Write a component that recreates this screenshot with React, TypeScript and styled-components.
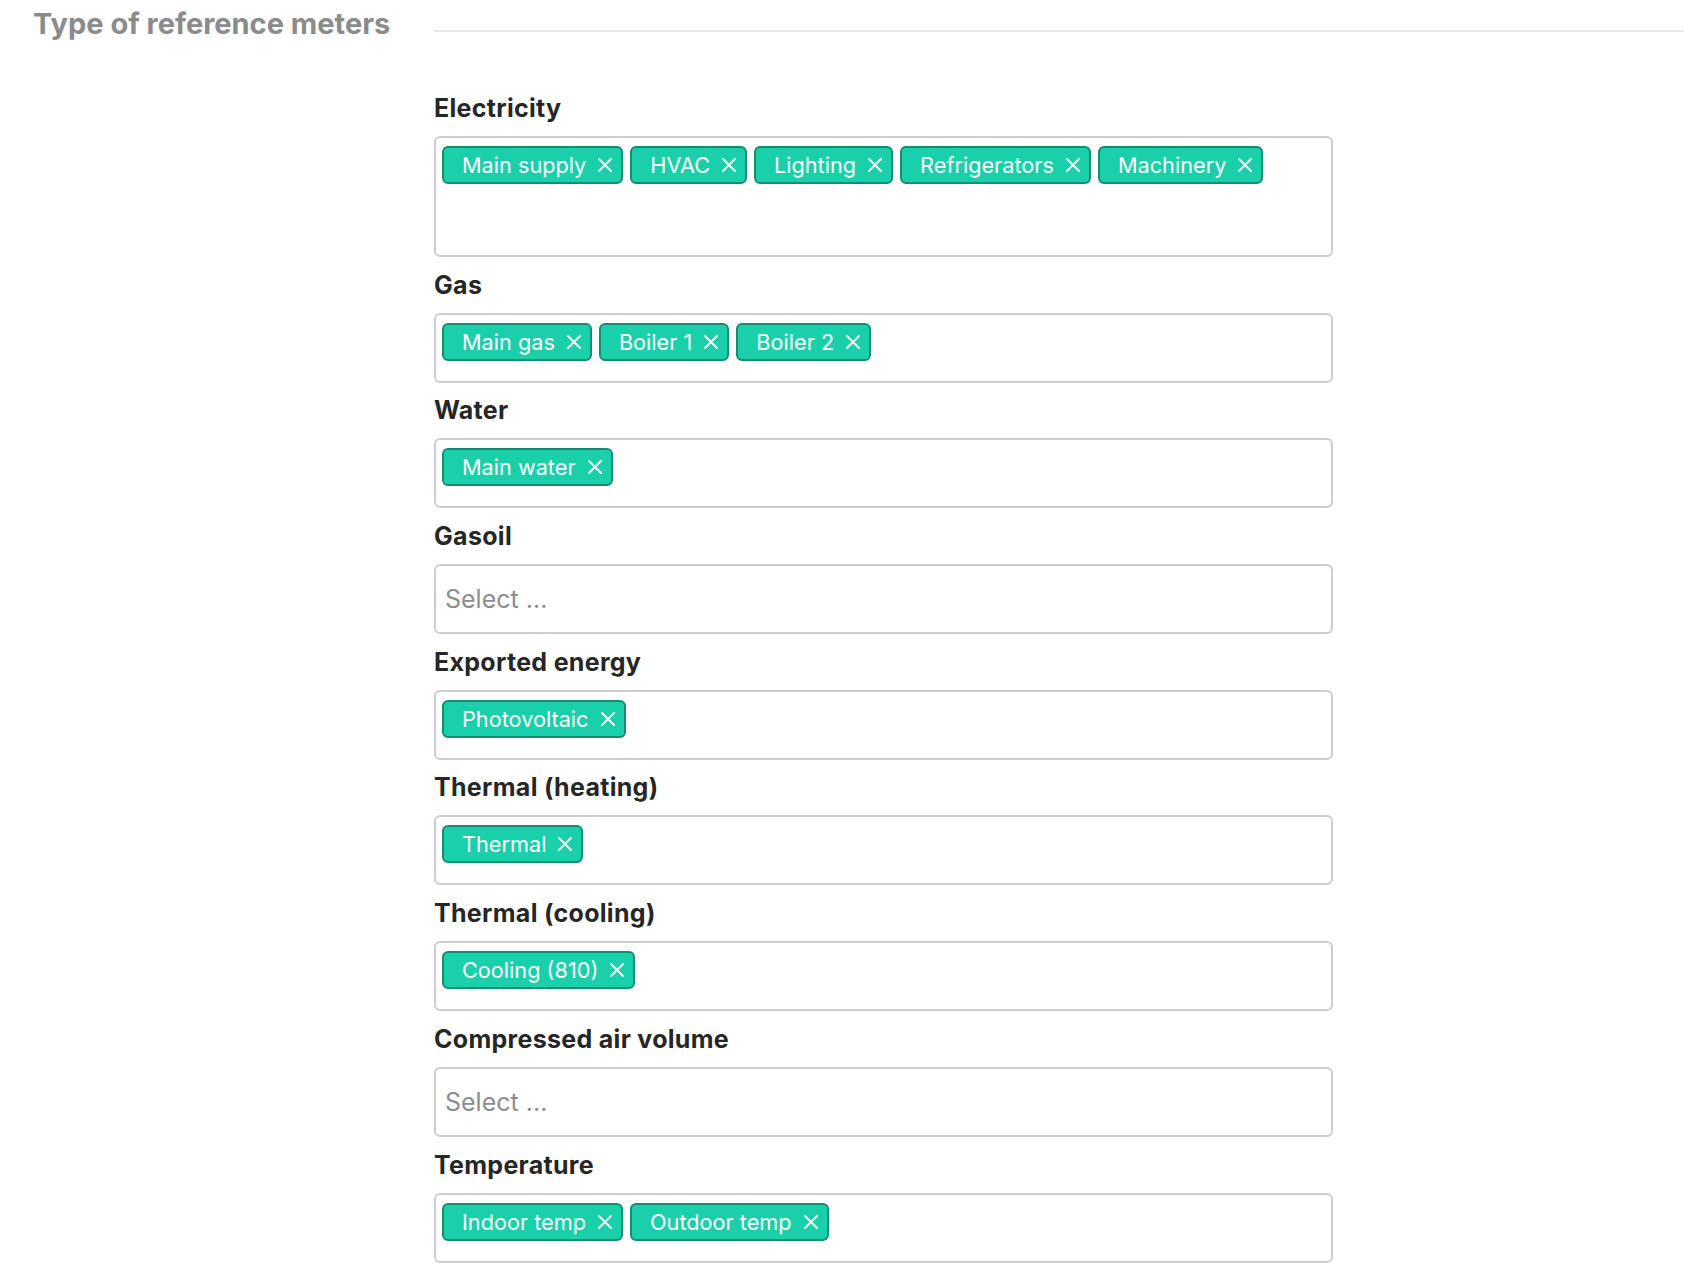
import React from "react";
import styled, { createGlobalStyle } from "styled-components";

const GlobalStyle = createGlobalStyle`
  html, body {
    margin: 0;
    padding: 0;
    background: #ffffff;
  }
  body {
    font-family: Inter, "Noto Sans", "Liberation Sans", sans-serif;
    color: #262626;
    -webkit-font-smoothing: antialiased;
  }
`;

type MeterGroup = {
  label: string;
  selected: string[];
  tall?: boolean;
};

const groups: MeterGroup[] = [
  {
    label: "Electricity",
    selected: ["Main supply", "HVAC", "Lighting", "Refrigerators", "Machinery"],
    tall: true,
  },
  { label: "Gas", selected: ["Main gas", "Boiler 1", "Boiler 2"] },
  { label: "Water", selected: ["Main water"] },
  { label: "Gasoil", selected: [] },
  { label: "Exported energy", selected: ["Photovoltaic"] },
  { label: "Thermal (heating)", selected: ["Thermal"] },
  { label: "Thermal (cooling)", selected: ["Cooling (810)"] },
  { label: "Compressed air volume", selected: [] },
  { label: "Temperature", selected: ["Indoor temp", "Outdoor temp"] },
];

const Section = styled.section`
  display: grid;
  grid-template-columns: 434px 1fr;
  min-height: 1278px;
`;

const SectionTitle = styled.h2`
  margin: 7px 0 0;
  padding-left: 33px;
  font-size: 29px;
  line-height: 34px;
  font-weight: 700;
  color: #8b8b8b;
  letter-spacing: 0;
`;

const Body = styled.div`
  display: flex;
  flex-direction: column;
`;

const Rule = styled.hr`
  margin: 30px 0 0;
  border: 0;
  height: 2px;
  background: #e7e7e7;
`;

const Fields = styled.div`
  display: flex;
  flex-direction: column;
  gap: 13.7px;
  width: 899px;
  padding-top: 62px;
`;

const Field = styled.div`
  display: flex;
  flex-direction: column;
  gap: 14px;
`;

const Label = styled.label`
  font-size: 25px;
  line-height: 28px;
  font-weight: 700;
  letter-spacing: 0.3px;
  color: #262626;
`;

const SelectBox = styled.div<{ $tall?: boolean; $empty?: boolean }>`
  box-sizing: border-box;
  display: flex;
  flex-wrap: wrap;
  align-items: center;
  align-content: ${(p) => (p.$empty ? "center" : "flex-start")};
  gap: 8px 7px;
  min-height: ${(p) => (p.$tall ? "121px" : "70px")};
  padding: ${(p) => (p.$empty ? "0 9px" : "8px 6px 20px")};
  border: 2px solid #cbcdd1;
  border-radius: 6px;
  background: #ffffff;
`;

const Placeholder = styled.span`
  font-size: 25px;
  line-height: 30px;
  color: #8d8d8d;
`;

const Tag = styled.span`
  box-sizing: border-box;
  display: inline-flex;
  align-items: center;
  gap: 12px;
  height: 38px;
  padding: 0 9px 0 18px;
  border: 2px solid #138c74;
  border-radius: 6px;
  background: #1ad0aa;
  color: #ffffff;
  font-size: 21.7px;
  line-height: 26px;
  white-space: nowrap;
`;

const RemoveButton = styled.button`
  display: inline-flex;
  align-items: center;
  justify-content: center;
  width: 14px;
  height: 14px;
  padding: 0;
  border: 0;
  background: transparent;
  color: #ffffff;
  cursor: pointer;
`;

const CrossIcon = () => (
  <svg width="14" height="14" viewBox="0 0 14 14" aria-hidden="true">
    <path
      d="M1 1 L13 13 M13 1 L1 13"
      stroke="currentColor"
      strokeWidth="1.8"
      strokeLinecap="round"
    />
  </svg>
);

const MeterSelect = ({ group }: { group: MeterGroup }) => {
  const empty = group.selected.length === 0;
  return (
    <SelectBox $tall={group.tall} $empty={empty}>
      {empty ? (
        <Placeholder>Select ...</Placeholder>
      ) : (
        group.selected.map((name) => (
          <Tag key={name}>
            {name}
            <RemoveButton type="button" aria-label={`Remove ${name}`}>
              <CrossIcon />
            </RemoveButton>
          </Tag>
        ))
      )}
    </SelectBox>
  );
};

export default function App() {
  return (
    <>
      <GlobalStyle />
      <Section>
        <SectionTitle>Type of reference meters</SectionTitle>
        <Body>
          <Rule />
          <Fields>
            {groups.map((group) => (
              <Field key={group.label}>
                <Label>{group.label}</Label>
                <MeterSelect group={group} />
              </Field>
            ))}
          </Fields>
        </Body>
      </Section>
    </>
  );
}
